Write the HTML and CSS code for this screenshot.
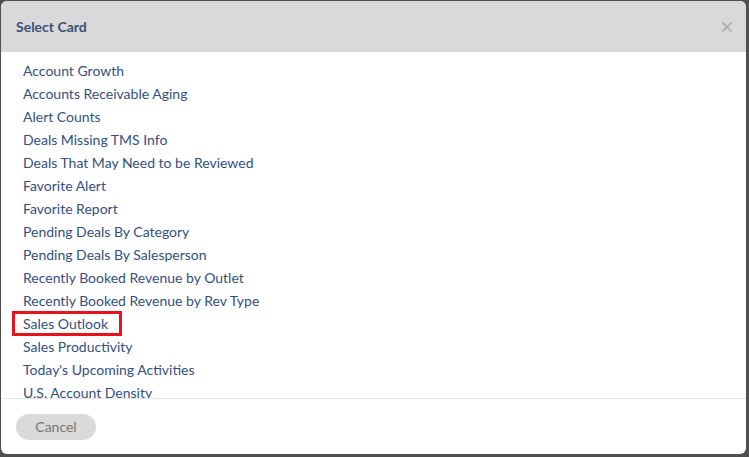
FILE: index.html
```html
<!DOCTYPE html>
<html>
<head>
<meta charset="utf-8">
<link rel="stylesheet" href="styles.css">
</head>
<body>
<div class="modal">
  <div class="modal-header">
    <h1 class="modal-title">Select Card</h1>
    <button class="close-btn" aria-label="Close">
      <svg width="10" height="10" viewBox="0 0 10 10"><path d="M1 1L9 9M9 1L1 9" stroke="#b3b3b3" stroke-width="2" stroke-linecap="square"/></svg>
    </button>
  </div>
  <div class="modal-body">
    <ul class="card-list">
      <li>Account Growth</li>
      <li>Accounts Receivable Aging</li>
      <li>Alert Counts</li>
      <li>Deals Missing TMS Info</li>
      <li>Deals That May Need to be Reviewed</li>
      <li>Favorite Alert</li>
      <li>Favorite Report</li>
      <li>Pending Deals By Category</li>
      <li>Pending Deals By Salesperson</li>
      <li>Recently Booked Revenue by Outlet</li>
      <li>Recently Booked Revenue by Rev Type</li>
      <li class="highlight">Sales Outlook</li>
      <li>Sales Productivity</li>
      <li>Today's Upcoming Activities</li>
      <li>U.S. Account Density</li>
    </ul>
  </div>
  <div class="modal-footer">
    <button class="cancel-btn">Cancel</button>
  </div>
</div>
</body>
</html>
```
FILE: styles.css
```css
html, body {
  margin: 0;
  padding: 0;
  height: 100%;
}
body {
  background: #4f4f4f;
  font-family: Lato, "Open Sans", sans-serif;
  font-size: 14px;
  padding: 1px 3px 3px 1px;
  box-sizing: border-box;
}
.modal {
  height: 453px;
  background: #fff;
  border-radius: 6px;
  overflow: hidden;
  display: flex;
  flex-direction: column;
}
.modal-header {
  height: 51px;
  flex: none;
  background: #d9d9d9;
  display: flex;
  align-items: center;
  justify-content: space-between;
  padding: 0 14px 0 15px;
}
.modal-title {
  margin: 0;
  font-size: 14px;
  font-weight: 700;
  color: #3b5078;
}
.close-btn {
  border: 0;
  background: none;
  padding: 0;
  width: 10px;
  height: 10px;
  display: flex;
  margin-top: 1px;
}
.modal-body {
  flex: 1;
  overflow: hidden;
  padding-top: 7px;
}
.card-list {
  list-style: none;
  margin: 0;
  padding: 0 0 0 22px;
}
.card-list li {
  line-height: 23px;
  color: #33507f;
  position: relative;
  width: max-content;
}
.card-list li.highlight::before {
  content: "";
  position: absolute;
  left: -11px;
  top: -1px;
  width: 110px;
  height: 25px;
  border: 3px solid #e8141c;
  box-sizing: border-box;
}
.modal-footer {
  flex: none;
  height: 56px;
  border-top: 1px solid #e6e6e6;
  box-sizing: border-box;
  padding: 15px 15px 0;
}
.cancel-btn {
  width: 80px;
  height: 26px;
  border: 0;
  border-radius: 13px;
  background: #dadada;
  color: #757575;
  font-family: Lato, "Open Sans", sans-serif;
  font-size: 14px;
  line-height: 25px;
  padding: 0 0 1px;
}
```
